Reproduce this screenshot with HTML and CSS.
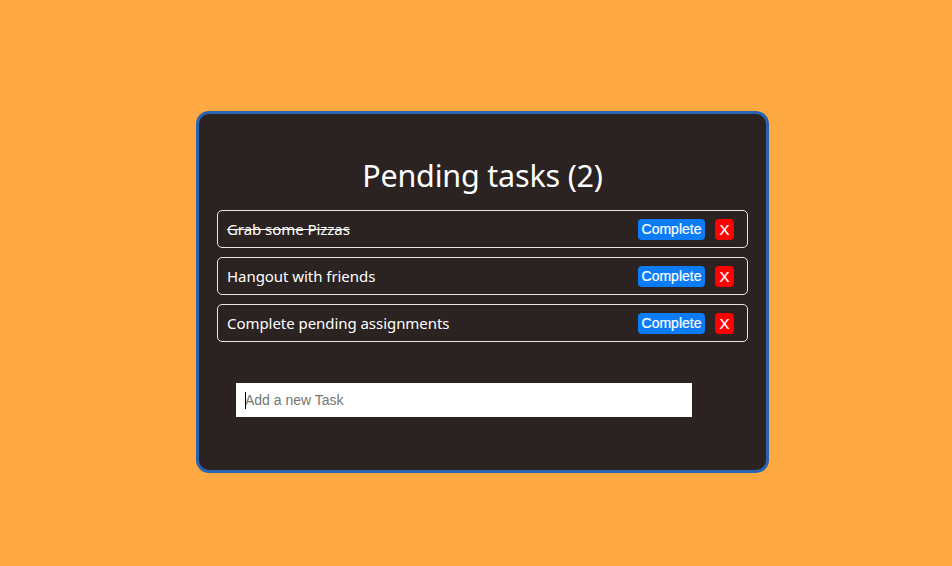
FILE: index.html
```html
<!DOCTYPE html>
<html lang="en">
<head>
<meta charset="utf-8">
<title>Tasks</title>
<link rel="stylesheet" href="styles.css">
</head>
<body>
<main class="page">
  <section class="card">
    <h1 class="title">Pending tasks (2)</h1>
    <ul class="tasks">
      <li class="task">
        <span class="task-text done">Grab some Pizzas</span>
        <button class="btn btn-complete">Complete</button>
        <button class="btn btn-delete">X</button>
      </li>
      <li class="task">
        <span class="task-text">Hangout with friends</span>
        <button class="btn btn-complete">Complete</button>
        <button class="btn btn-delete">X</button>
      </li>
      <li class="task">
        <span class="task-text">Complete pending assignments</span>
        <button class="btn btn-complete">Complete</button>
        <button class="btn btn-delete">X</button>
      </li>
    </ul>
    <form class="add-form">
      <div class="input-wrap">
        <span class="caret"></span>
        <input class="task-input" type="text" placeholder="Add a new Task">
      </div>
    </form>
  </section>
</main>
</body>
</html>
```
FILE: styles.css
```css
html, body {
  margin: 0;
  padding: 0;
  background: #ffa943;
  height: 100%;
}
.page {
  display: flex;
  justify-content: flex-start;
  padding: 111px 0 0 196px;
}
.card {
  box-sizing: border-box;
  width: 573px;
  height: 362px;
  background: #2b2322;
  border: 3px solid #2a63b2;
  border-radius: 13px;
  padding: 0 18px;
  color: #fff;
  font-family: "Noto Sans", "Open Sans", sans-serif;
}
.title {
  margin: 39px 0 0;
  font-weight: 400;
  font-size: 30.5px;
  line-height: 44px;
  text-align: center;
  letter-spacing: -0.2px;
}
.tasks {
  list-style: none;
  margin: 13px 0 0;
  padding: 0;
  display: flex;
  flex-direction: column;
  gap: 9px;
}
.task {
  box-sizing: border-box;
  height: 38px;
  border: 1px solid #e8e6e6;
  border-radius: 5px;
  display: flex;
  align-items: center;
  padding: 0 13px 0 9px;
  gap: 10px;
}
.task-text {
  flex: 1;
  font-size: 15px;
  letter-spacing: -0.05px;
}
.done {
  text-decoration: line-through;
}
.btn {
  border: none;
  color: #fff;
  font-family: "Liberation Sans", Arial, sans-serif;
  font-size: 14px;
  height: 21px;
  border-radius: 4px;
  padding: 0;
  cursor: pointer;
  -webkit-text-stroke: 0.2px #fff;
}
.btn-complete {
  background: #0b7bf6;
  width: 67px;
}
.btn-delete {
  background: #ff0000;
  width: 19px;
  font-size: 15px;
}
.add-form {
  margin: 41px 0 0 19px;
}
.input-wrap {
  position: relative;
  width: 456px;
}
.task-input {
  box-sizing: border-box;
  width: 456px;
  height: 34px;
  border: none;
  outline: none;
  background: #fff;
  padding: 0 9px;
  font-family: "Liberation Sans", Arial, sans-serif;
  font-size: 14px;
  display: block;
}
.task-input::placeholder {
  color: #757575;
}
.caret {
  position: absolute;
  left: 9px;
  top: 9px;
  width: 1px;
  height: 17px;
  background: #000;
}
```
